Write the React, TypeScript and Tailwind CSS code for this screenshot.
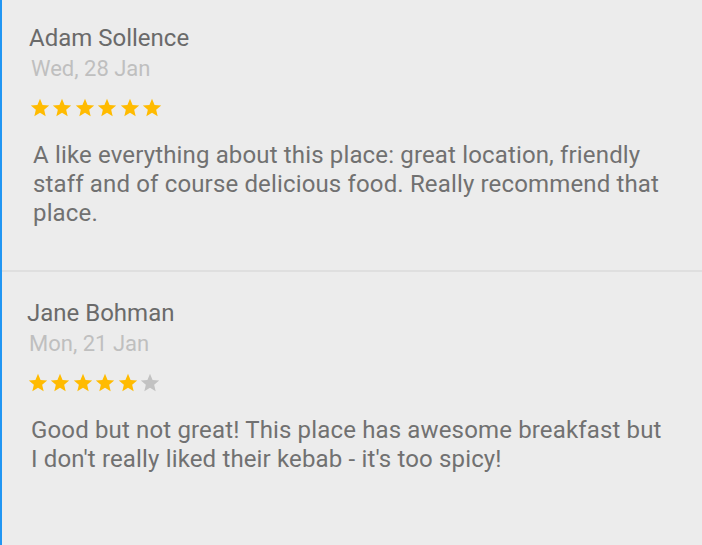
import React from "react";

const Star = ({ on }: { on: boolean }) => (
  <svg width="22" height="22" viewBox="0 0 24 24" className="shrink-0">
    <path
      d="M12 17.27L18.18 21l-1.64-7.03L22 9.24l-7.19-.61L12 2 9.19 8.63 2 9.24l5.46 4.73L5.82 21z"
      fill={on ? "#ffbb00" : "#c2c2c2"}
    />
  </svg>
);

const Review = ({
  name,
  date,
  stars,
  text,
  first,
}: {
  name: string;
  date: string;
  stars: number;
  text: string;
  first: boolean;
}) => (
  <div className={first ? "pl-[27px] pr-[36px]" : "pl-[25px] pr-[36px]"}>
    <div className="text-[24px] leading-[28px] text-[#6a6a6a]">{name}</div>
    <div className="pl-[2px] text-[22px] leading-[33px] text-[#bfbfbf]">{date}</div>
    <div className="mt-[12px] flex gap-[0.4px]">
      {[0, 1, 2, 3, 4, 5].map((i) => (
        <Star key={i} on={i < stars} />
      ))}
    </div>
    <p className="mt-[22px] pl-[4px] text-[24px] leading-[29px] tracking-[0.15px] text-[#717171]">
      {text}
    </p>
  </div>
);

export default function App() {
  return (
    <div
      className="w-[702px] h-[545px] bg-[#ececec] border-l-2 border-[#2196f3] overflow-hidden"
      style={{ fontFamily: "Roboto, 'Noto Sans', sans-serif" }}
    >
      <div className="pt-[24px] pb-[42px]">
        <Review
          first
          name="Adam Sollence"
          date="Wed, 28 Jan"
          stars={6}
          text="A like everything about this place: great location, friendly staff and of course delicious food. Really recommend that place."
        />
      </div>
      <div className="h-[2px] bg-[#dfdfdf]" />
      <div className="pt-[27px]">
        <Review
          first={false}
          name="Jane Bohman"
          date="Mon, 21 Jan"
          stars={5}
          text="Good but not great! This place has awesome breakfast but I don't really liked their kebab - it's too spicy!"
        />
      </div>
    </div>
  );
}
